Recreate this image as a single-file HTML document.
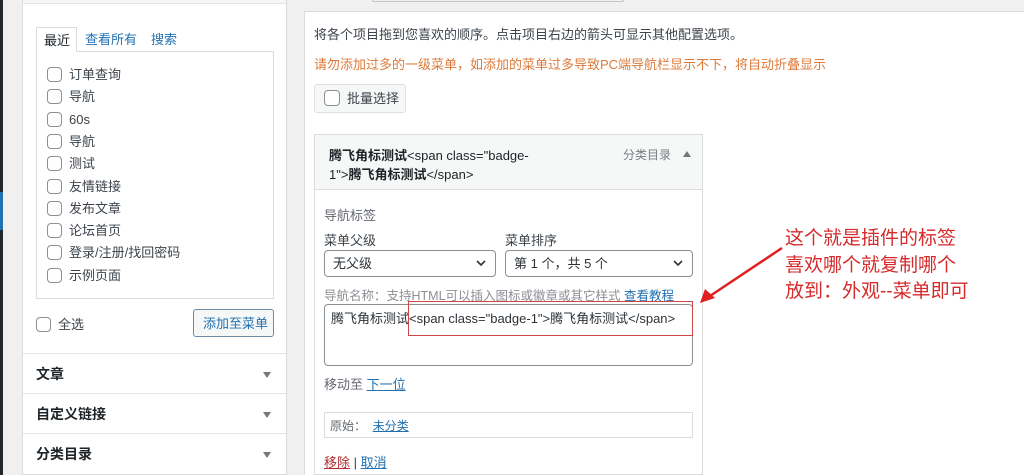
<!DOCTYPE html>
<html><head><meta charset="utf-8"><style>
*{margin:0;padding:0;box-sizing:border-box}
body{width:1024px;height:475px;overflow:hidden;background:#f0f0f1;font-family:"Liberation Sans","Noto Sans CJK SC",sans-serif;font-size:13px;line-height:16px;color:#3c434a;position:relative}
.a{position:absolute}
.cb{position:absolute;width:15px;height:15px;border:1px solid #8c8f94;border-radius:4px;background:#fff}
.lk{color:#2271b1}
.sel{position:absolute;height:27px;border:1px solid #8c8f94;border-radius:4px;background:#fff;padding:5px 8px;font-size:13px;color:#2c3338}
.chev{position:absolute;right:8px;top:7px;width:12px;height:10px}
.tri{position:absolute;width:0;height:0;border-left:4px solid transparent;border-right:4px solid transparent;border-top:6px solid #777}
</style></head><body>
<div class="a" style="left:0;top:0;width:3px;height:475px;background:#23282d"></div>
<div class="a" style="left:0;top:192px;width:3px;height:38px;background:#2271b1"></div>

<div class="a" style="left:22px;top:0;width:265px;height:475px;background:#fff;border:1px solid #dcdcde"></div>
<div class="a" style="left:23px;top:0;width:263px;height:4px;background:#f6f7f7;border-bottom:1px solid #e5e5e5"></div>
<div class="a" style="left:36px;top:27px;width:41px;height:25px;border:1px solid #dcdcde;border-bottom:none;background:#fff;z-index:2;padding:5px 0 0 7px;color:#1d2327">最近</div>
<div class="a" style="left:85px;top:32px;"><span class="lk">查看所有</span></div>
<div class="a" style="left:151px;top:32px;"><span class="lk">搜索</span></div>
<div class="a" style="left:36px;top:51px;width:238px;height:248px;border:1px solid #dcdcde;background:#fff"></div>
<div id="items"></div>
<div class="cb" style="left:36px;top:317px"></div>
<div class="a" style="left:58px;top:317px;color:#3c434a">全选</div>
<div class="a" style="left:193px;top:309px;width:81px;height:28px;border:1px solid #6b8aa5;border-radius:3px;background:#f6f7f7;color:#2271b1;padding:6px 0 0 9px">添加至菜单</div>
<div class="a" style="left:23px;top:353px;width:263px;height:1px;background:#e5e5e5"></div>
<div class="a" style="left:23px;top:393px;width:263px;height:1px;background:#e5e5e5"></div>
<div class="a" style="left:23px;top:433px;width:263px;height:1px;background:#e5e5e5"></div>
<div class="a" style="left:36px;top:366px;font-weight:bold;font-size:14px;color:#1d2327">文章</div>
<div class="a" style="left:36px;top:406px;font-weight:bold;font-size:14px;color:#1d2327">自定义链接</div>
<div class="a" style="left:36px;top:446px;font-weight:bold;font-size:14px;color:#1d2327">分类目录</div>
<div class="tri" style="left:263px;top:372px"></div>
<div class="tri" style="left:263px;top:412px"></div>
<div class="tri" style="left:263px;top:452px"></div>

<div class="a" style="left:304px;top:11px;width:720px;height:464px;background:#fff;border-left:1px solid #dcdcde;border-top:1px solid #dcdcde"></div>
<div class="a" style="left:372px;top:0;width:252px;height:2px;border:1px solid #c3c4c7;border-top:none;border-radius:0 0 4px 4px"></div>
<div class="a" style="left:314px;top:27px;color:#3c434a">将各个项目拖到您喜欢的顺序。点击项目右边的箭头可显示其他配置选项。</div>
<div class="a" style="left:314px;top:57px;color:#dd7a3a">请勿添加过多的一级菜单，如添加的菜单过多导致PC端导航栏显示不下，将自动折叠显示</div>
<div class="a" style="left:314px;top:84px;width:92px;height:29px;border:1px solid #e0e0e0;border-radius:3px;background:#f6f7f7"></div>
<div class="cb" style="left:324px;top:90px;width:16px;height:16px"></div>
<div class="a" style="left:347px;top:91px">批量选择</div>

<div class="a" style="left:314px;top:134px;width:389px;height:341px;border:1px solid #dcdcde;background:#fff"></div>
<div class="a" style="left:315px;top:135px;width:387px;height:55px;background:#f6f7f7;border-bottom:1px solid #dcdcde"></div>
<div class="a" style="left:329px;top:146px;width:200px;line-height:19px;font-weight:bold;color:#1d2327;word-break:break-all">腾飞角标测试<span style="font-weight:normal">&lt;span class="badge-<br>1"&gt;</span>腾飞角标测试<span style="font-weight:normal">&lt;/span&gt;</span></div>
<div class="a" style="left:623px;top:147px;color:#787c82;font-size:12px">分类目录</div>
<div class="a" style="left:683px;top:151px;width:0;height:0;border-left:4px solid transparent;border-right:4px solid transparent;border-bottom:6px solid #777"></div>

<div class="a" style="left:324px;top:208px;color:#646970">导航标签</div>
<div class="a" style="left:324px;top:233px;color:#3c434a">菜单父级</div>
<div class="a" style="left:505px;top:233px;color:#3c434a">菜单排序</div>
<div class="sel" style="left:324px;top:250px;width:172px">无父级<svg class="chev" viewBox="0 0 12 10"><path d="M2 3l4 4 4-4" fill="none" stroke="#333" stroke-width="1.6"/></svg></div>
<div class="sel" style="left:505px;top:250px;width:188px">第 1 个，共 5 个<svg class="chev" viewBox="0 0 12 10"><path d="M2 3l4 4 4-4" fill="none" stroke="#333" stroke-width="1.6"/></svg></div>
<div class="a" style="left:324px;top:288px;color:#8c8f94;font-size:12.5px">导航名称：支持HTML可以插入图标或徽章或其它样式 <span class="lk" style="text-decoration:underline">查看教程</span></div>
<div class="a" style="left:324px;top:304px;width:369px;height:62px;border:1px solid #8c8f94;border-radius:4px;background:#fff"></div>
<div class="a" style="left:331px;top:311px;color:#2c3338;white-space:nowrap">腾飞角标测试&lt;span class="badge-1"&gt;腾飞角标测试&lt;/span&gt;</div>
<div class="a" style="left:408px;top:301px;width:285px;height:35px;border:1.5px solid #d04545"></div>
<div class="a" style="left:324px;top:377px;color:#646970">移动至 <span class="lk" style="text-decoration:underline">下一位</span></div>
<div class="a" style="left:324px;top:412px;width:369px;height:26px;border:1px solid #dcdcde;padding:5px 0 0 5px;color:#646970;font-size:12px">原始：&nbsp;&nbsp;<span class="lk" style="text-decoration:underline">未分类</span></div>
<div class="a" style="left:324px;top:455px"><span style="color:#b32d2e;text-decoration:underline">移除</span> | <span class="lk" style="text-decoration:underline">取消</span></div>

<svg class="a" style="left:695px;top:240px" width="95" height="70"><path d="M87 8 L12 58" stroke="#e02020" stroke-width="2.5" fill="none"/><path d="M5 63 L10 49 L20 58 Z" fill="#e02020"/></svg>
<div class="a" style="left:785px;top:226px;color:#d62b2b;font-size:19px;line-height:26.5px">这个就是插件的标签<br>喜欢哪个就复制哪个<br>放到：外观--菜单即可</div>

<script>
var t=["订单查询","导航","60s","导航","测试","友情链接","发布文章","论坛首页","登录/注册/找回密码","示例页面"],h="";
t.forEach(function(s,i){var y=67+i*22.3;h+='<div class="cb" style="left:47px;top:'+y+'px"></div><div class="a" style="left:69px;top:'+y+'px;color:#3c434a">'+s+'</div>';});
document.getElementById('items').innerHTML=h;
</script>
</body></html>
